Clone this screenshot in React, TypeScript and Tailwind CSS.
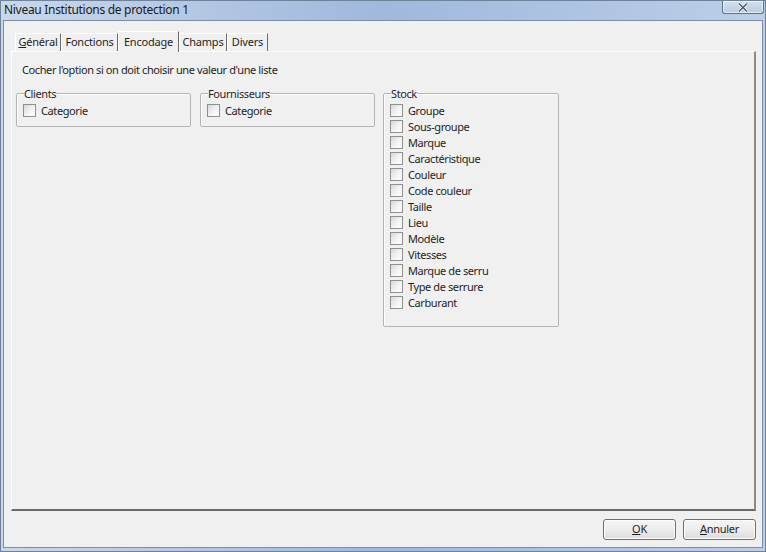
import React from "react";

const font = { fontFamily: '"Noto Sans", "Open Sans", sans-serif' };

function Check({ label }: { label: string }) {
  return (
    <div className="flex items-center h-[16px]">
      <span className="w-[13px] h-[13px] border border-[#8e8f8f] bg-gradient-to-br from-[#d6d6d6] via-[#f2f2f2] to-white shrink-0" />
      <span className="ml-[5px] text-[11px] tracking-[-0.4px] text-[#1e1e1e] leading-none">{label}</span>
    </div>
  );
}

function Group({ title, items, cls }: { title: string; items: string[]; cls: string }) {
  return (
    <fieldset className={`border border-[#b4b4b4] rounded-[2px] shadow-[inset_1px_1px_0_#fff] px-[6px] ${cls}`}>
      <legend className="ml-[1px] px-0 text-[11px] tracking-[-0.4px] text-[#1e1e1e] leading-[13px]">{title}</legend>
      <div className="flex flex-col pt-[2px]">
        {items.map((i) => (
          <Check key={i} label={i} />
        ))}
      </div>
    </fieldset>
  );
}

function Tab({ children, active, w }: { children: React.ReactNode; active?: boolean; w: string }) {
  if (active) {
    return (
      <div className={`h-[21px] -mb-px z-10 flex items-center justify-center bg-[#f0f0f0] border-l border-white border-t border-t-white border-r border-r-[#696969] text-[11px] tracking-[-0.2px] text-[#1e1e1e] ${w}`}>
        {children}
      </div>
    );
  }
  return (
    <div className={`h-[18px] flex items-center justify-center bg-[#f0f0f0] border-l border-white border-t border-t-white border-r border-r-[#696969] text-[11px] tracking-[-0.2px] text-[#1e1e1e] ${w}`}>
      {children}
    </div>
  );
}

export default function App() {
  const stock = [
    "Groupe",
    "Sous-groupe",
    "Marque",
    "Caractéristique",
    "Couleur",
    "Code couleur",
    "Taille",
    "Lieu",
    "Modèle",
    "Vitesses",
    "Marque de serru",
    "Type de serrure",
    "Carburant",
  ];
  return (
    <div style={font} className="w-[766px] h-[552px] flex flex-col bg-gradient-to-r from-[#c9d7ea] via-[#9fb8dc] to-[#bccfe8] border border-[#6f829b] overflow-hidden">
      {/* Title bar */}
      <div className="h-[19px] flex items-start justify-between relative">
        <span className="ml-[3px] mt-[1px] text-[12px] tracking-[-0.3px] leading-[16px] text-[#1a1a1a]">Niveau Institutions de protection 1</span>
        <div className="mr-[1px] w-[42px] h-[13px] rounded-b-[3px] border border-t-0 border-[#5f6f87] bg-gradient-to-b from-[#d5e0ef] to-[#b9cbe3] shadow-[inset_0_0_0_1px_rgba(255,255,255,0.6)] flex items-center justify-center">
          <svg width="10" height="9" viewBox="0 0 10 9">
            <path d="M1 0.5 L9 8.5 M9 0.5 L1 8.5" stroke="#ffffff" strokeWidth="3" />
            <path d="M1 0.5 L9 8.5 M9 0.5 L1 8.5" stroke="#4a5a72" strokeWidth="1.5" />
          </svg>
        </div>
      </div>
      {/* Body */}
      <div className="flex-1 mx-[2px] mb-[3px] border border-[#7c8ea6] bg-[#f0f0f0] flex flex-col">
        <div className="mt-[10px] ml-[7px] mr-[6px] flex flex-col">
          {/* tabs */}
          <div className="flex items-end pl-[4px] h-[20px]">
            <Tab w="w-[46px]">
              <span><span className="underline">G</span>énéral</span>
            </Tab>
            <Tab w="w-[57px]">Fonctions</Tab>
            <Tab active w="w-[61px]">Encodage</Tab>
            <Tab w="w-[48px]">Champs</Tab>
            <Tab w="w-[41px]">Divers</Tab>
          </div>
          {/* panel */}
          <div className="h-[460px] border-t border-l border-white border-r-2 border-r-[#8a8a8a] border-b-2 border-b-[#6a6a6a] bg-[#f0f0f0] px-[4px] pt-[11px]">
            <div className="ml-[6px] text-[11px] tracking-[-0.4px] text-[#1e1e1e] leading-[14px]">
              Cocher l'option si on doit choisir une valeur d'une liste
            </div>
            <div className="flex items-start mt-[10px]">
              <Group title="Clients" items={["Categorie"]} cls="w-[175px] h-[40px]" />
              <Group title="Fournisseurs" items={["Categorie"]} cls="ml-[9px] w-[175px] h-[40px]" />
              <Group title="Stock" items={stock} cls="ml-[8px] w-[176px] h-[240px]" />
            </div>
          </div>
          {/* buttons */}
          <div className="flex justify-end gap-[7px] mt-[8px] mr-[0px]">
            <button className="w-[73px] h-[21px] rounded-[3px] border border-[#707070] bg-gradient-to-b from-[#f6f6f6] via-[#ececec] to-[#dcdcdc] shadow-[inset_0_0_0_1px_#fcfcfc] text-[11px] tracking-[-0.3px] text-[#1e1e1e]">
              <span className="underline">O</span>K
            </button>
            <button className="w-[73px] h-[21px] rounded-[3px] border border-[#707070] bg-gradient-to-b from-[#f6f6f6] via-[#ececec] to-[#dcdcdc] shadow-[inset_0_0_0_1px_#fcfcfc] text-[11px] tracking-[-0.3px] text-[#1e1e1e]">
              <span className="underline">A</span>nnuler
            </button>
          </div>
        </div>
      </div>
    </div>
  );
}
